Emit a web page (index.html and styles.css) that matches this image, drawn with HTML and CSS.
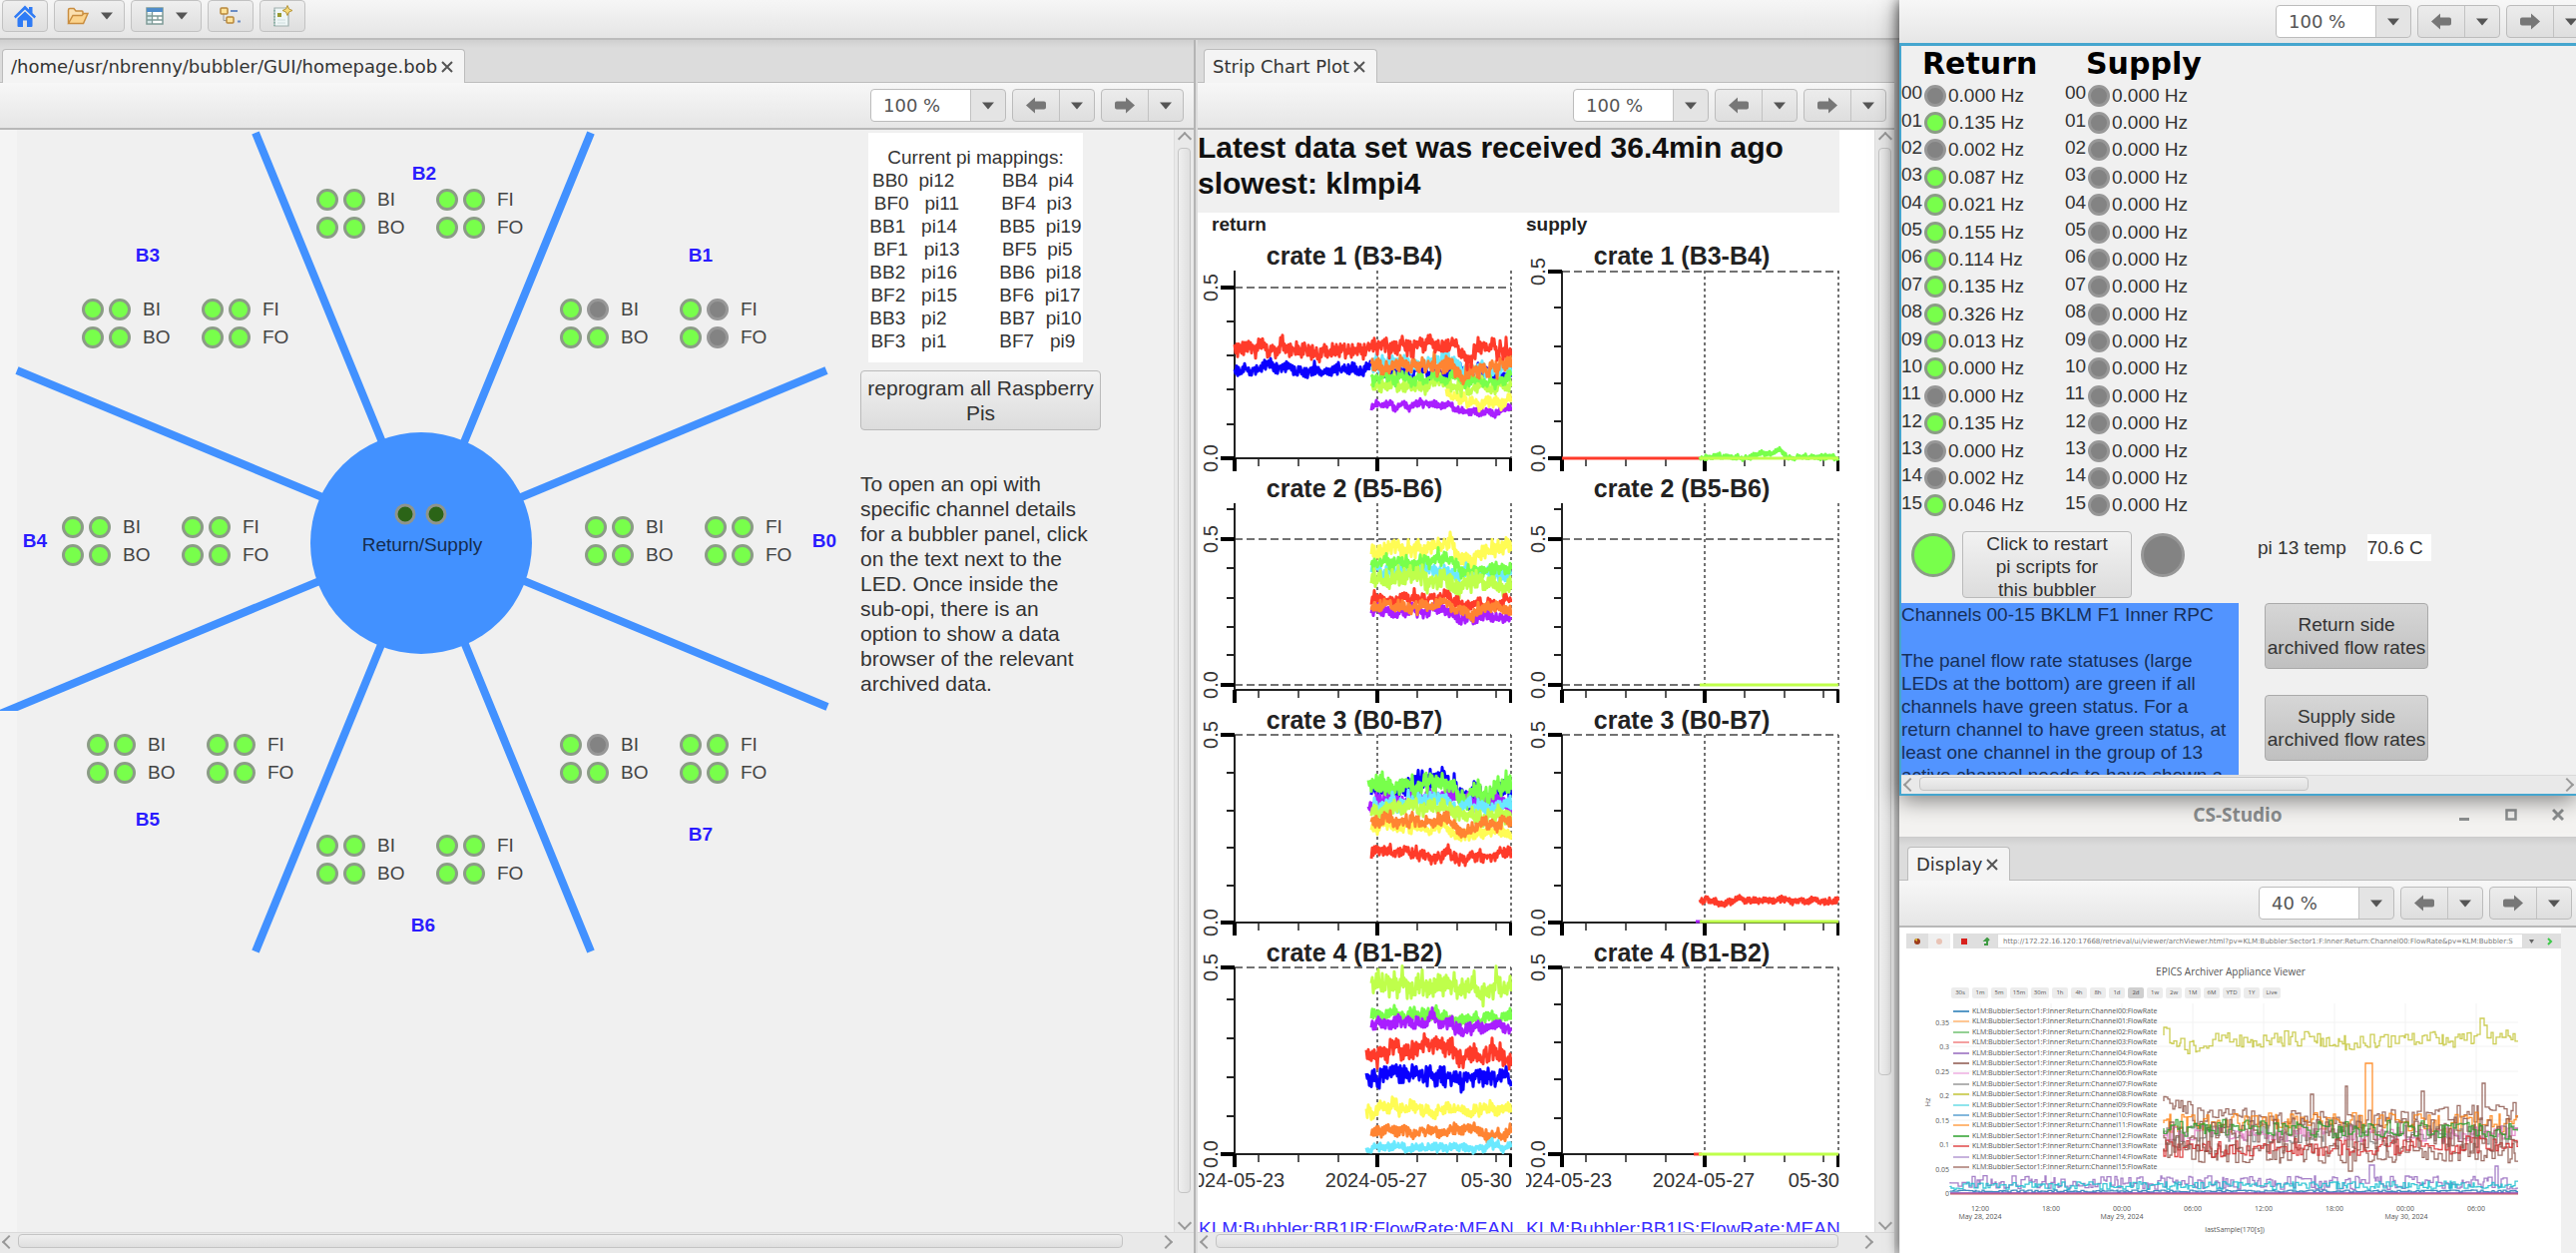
FILE: index.html
```html
<!DOCTYPE html>
<html lang="en">
<head>
<meta charset="UTF-8" />
<title>CS-Studio</title>
<link rel="stylesheet" href="styles.css">
</head>
<body>

<!-- shared icons -->
<svg class="defs" aria-hidden="true">
  <symbol id="i-left" viewBox="0 0 20 17"><path d="M0 8.500 9 0.500V4.500H18Q20 4.500 20 6.500V10.500Q20 12.500 18 12.500H9V16.500Z" fill="#777"/></symbol>
  <symbol id="i-right" viewBox="0 0 20 17"><path d="M20 8.500 11 0.500V4.500H2Q0 4.500 0 6.500V10.500Q0 12.500 2 12.500H11V16.500Z" fill="#777"/></symbol>
  <symbol id="i-down" viewBox="0 0 12 8"><path d="M0 0.500H12L6 7.500Z" fill="#555"/></symbol>
  <symbol id="i-close" viewBox="0 0 12 12"><path d="M1 1 11 11M11 1 1 11" stroke="#555" stroke-width="2" fill="none"/></symbol>
</svg>

<div class="desktop">

  <!-- main window -->
  <main class="window main-window">
    <div class="main-toolbar">
      <button class="tool" aria-label="Home">
        <svg width="22" height="22" viewBox="0 0 22 22"><path d="M11 0.500 15 4.500V2H18.500V8L22 11.500 20.500 13.500 11 4.500 1.500 13.500 0 11.500Z" fill="#2f7bf5"/><path d="M11 6.500 18.500 13.500V21Q18.500 22 17.500 22H13V15.500H9V22H4.500Q3.500 22 3.500 21V13.500Z" fill="#2f7bf5"/></svg>
      </button>
      <button class="tool wide" aria-label="Open">
        <svg width="22" height="18" viewBox="0 0 22 18"><path d="M1.500 16V3Q1.500 1.500 3 1.500H7L9 4H15Q16 4 16 5V7" fill="#fbe0b0" stroke="#c98d3f" stroke-width="1.500"/><path d="M1.500 16.500 6 8.500H15L17 6.500H21L16.500 16.500Z" fill="#fbd38c" stroke="#c98d3f" stroke-width="1.500"/></svg>
        <svg class="down"><use href="#i-down"/></svg>
      </button>
      <button class="tool wide" aria-label="Layout">
        <svg width="18" height="18" viewBox="0 0 18 18"><rect x="1" y="1" width="16" height="16" fill="#fff" stroke="#7d9a97" stroke-width="1.500"/><rect x="1" y="1" width="16" height="4" fill="#4f8cc9"/><path d="M2 6H6V16H2Z" fill="#d6e8ea"/><path d="M6.500 5V17M1 9H17M1 13H17M12 9V13" stroke="#7d9a97" stroke-width="1.300"/></svg>
        <svg class="down"><use href="#i-down"/></svg>
      </button>
      <button class="tool" aria-label="Browse tree">
        <svg width="22" height="18" viewBox="0 0 22 18"><path d="M4 7V13.500H8" fill="none" stroke="#999" stroke-width="1"/><rect x="1" y="1" width="7" height="6" rx="1" fill="#ffe39a" stroke="#b8863a" stroke-width="1.500"/><rect x="7" y="10" width="7" height="6" rx="1" fill="#ffe39a" stroke="#b8863a" stroke-width="1.500"/><path d="M11 4H18M18 14.500H21" stroke="#6a8cc4" stroke-width="2"/></svg>
      </button>
      <button class="tool" aria-label="New display">
        <svg width="20" height="22" viewBox="0 0 20 22"><path d="M2 3H16V21H2Z" fill="#eef6f6" stroke="#9fb0ae" stroke-width="1.200"/><path d="M2 5V21" stroke="#8fb3a8" stroke-width="2" stroke-dasharray="1.500 1.500"/><path d="M5 8H9V12H5Z" fill="#9a9a30"/><path d="M5 15H13M5 18H13" stroke="#cfdede"/><path d="M15 0.500 16.500 4 20 5.500 16.500 7 15 10.500 13.500 7 10 5.500 13.500 4Z" fill="#f6dc7b" stroke="#b8963a"/></svg>
      </button>
    </div>

    <div class="panes">
      <section class="pane pane-home">
        <div class="tabs">
          <div class="tab">/home/usr/nbrenny/bubbler/GUI/homepage.bob <button class="close" aria-label="Close tab"><svg><use href="#i-close"/></svg></button></div>
        </div>
        <div class="toolbar">
          <div class="combo"><select aria-label="Zoom"><option>100 %</option></select><svg class="down"><use href="#i-down"/></svg></div>
          <div class="split"><button aria-label="Back"><svg class="arrow"><use href="#i-left"/></svg></button><button aria-label="Back history"><svg class="down"><use href="#i-down"/></svg></button></div>
          <div class="split"><button aria-label="Forward"><svg class="arrow"><use href="#i-right"/></svg></button><button aria-label="Forward history"><svg class="down"><use href="#i-down"/></svg></button></div>
        </div>
        <div class="scroller">
          <div class="display home">
            <div class="diagram" id="diagram">
              <svg class="spokes" width="862" height="850" viewBox="0 0 862 850">
                <clipPath id="spokeClip"><rect width="862" height="582"/></clipPath>
                <g stroke="#4291ff" stroke-width="8">
                  <path d="M256 3 592 823M592 3 256 823M17 241 829 578"/>
                  <path d="M828 241 -12 590" clip-path="url(#spokeClip)"/>
                </g>
                <circle cx="422" cy="414" r="111" fill="#4291ff"/>
                <g fill="#2b6417" stroke="#8f958c" stroke-width="3">
                  <circle cx="406" cy="385" r="9"/>
                  <circle cx="437" cy="385" r="9"/>
                </g>
                <text x="423" y="422" text-anchor="middle" class="hub">Return/Supply</text>
              </svg>
            </div>
            <div class="side">
<pre class="mappings">Current pi mappings:
BB0  pi12         BB4  pi4 
BF0   pi11        BF4  pi3 
BB1   pi14        BB5  pi19
BF1   pi13        BF5  pi5 
BB2   pi16        BB6  pi18
BF2   pi15        BF6  pi17
BB3   pi2          BB7  pi10
BF3   pi1          BF7   pi9 </pre>
              <button class="action reprogram">reprogram all Raspberry Pis</button>
              <p class="help">To open an opi with specific channel details for a bubbler panel, click on the text next to the LED. Once inside the sub-opi, there is an option to show a data browser of the relevant archived data.</p>
            </div>
          </div>
          <div class="vbar"><i class="chev up"></i><div class="track"><div class="thumb t98"></div></div><i class="chev dn"></i></div>
        </div>
        <div class="hbar"><i class="chev lt"></i><div class="track"><div class="thumb t97"></div></div><i class="chev rt"></i></div>
      </section>

      <section class="pane pane-strip">
        <div class="tabs">
          <div class="tab">Strip Chart Plot <button class="close" aria-label="Close tab"><svg><use href="#i-close"/></svg></button></div>
        </div>
        <div class="toolbar">
          <div class="combo"><select aria-label="Zoom"><option>100 %</option></select><svg class="down"><use href="#i-down"/></svg></div>
          <div class="split"><button aria-label="Back"><svg class="arrow"><use href="#i-left"/></svg></button><button aria-label="Back history"><svg class="down"><use href="#i-down"/></svg></button></div>
          <div class="split"><button aria-label="Forward"><svg class="arrow"><use href="#i-right"/></svg></button><button aria-label="Forward history"><svg class="down"><use href="#i-down"/></svg></button></div>
        </div>
        <div class="scroller">
          <div class="display strip">
            <h1>Latest data set was received 36.4min ago<br>slowest: klmpi4</h1>
            <div class="strip-cols">
              <div class="strip-col">
                <h2 class="indent">return</h2>
                <svg id="returnCharts" width="314" height="960" viewBox="0 240 314 960"></svg>
                <a href="#">KLM:Bubbler:BB1IR:FlowRate:MEAN</a>
              </div>
              <div class="strip-col">
                <h2>supply</h2>
                <svg id="supplyCharts" width="314" height="960" viewBox="0 240 314 960"></svg>
                <a href="#">KLM:Bubbler:BB1IS:FlowRate:MEAN</a>
              </div>
            </div>
          </div>
          <div class="vbar"><i class="chev up"></i><div class="track"><div class="thumb t87"></div></div><i class="chev dn"></i></div>
        </div>
        <div class="hbar"><i class="chev lt"></i><div class="track"><div class="thumb t97"></div></div><i class="chev rt"></i></div>
      </section>
    </div>
  </main>

  <div class="side-windows">
    <!-- panel details -->
    <section class="window panel-window">
      <div class="toolbar overhang">
        <div class="combo"><select aria-label="Zoom"><option>100 %</option></select><svg class="down"><use href="#i-down"/></svg></div>
        <div class="split"><button aria-label="Back"><svg class="arrow"><use href="#i-left"/></svg></button><button aria-label="Back history"><svg class="down"><use href="#i-down"/></svg></button></div>
        <div class="split"><button aria-label="Forward"><svg class="arrow"><use href="#i-right"/></svg></button><button aria-label="Forward history"><svg class="down"><use href="#i-down"/></svg></button></div>
      </div>
      <div class="panel-frame">
        <div class="display panel">
          <div class="channels">
            <table><caption>Return</caption><tbody id="returnChannels"></tbody></table>
            <table><caption>Supply</caption><tbody id="supplyChannels"></tbody></table>
          </div>
          <div class="status">
            <span class="led big on"></span>
            <button class="action restart">Click to restart<br>pi scripts for<br>this bubbler</button>
            <span class="led big"></span>
            <span class="temp-label">pi 13 temp</span>
            <span class="temp">70.6 C</span>
          </div>
          <div class="details">
            <div class="note">Channels 00-15 BKLM F1 Inner RPC<br><br>The panel flow rate statuses (large LEDs at the bottom) are green if all channels have green status. For a return channel to have green status, at least one channel in the group of 13 active channel needs to have shown a</div>
            <div class="archive-buttons">
              <button class="action dark">Return side archived flow rates</button>
              <button class="action dark">Supply side archived flow rates</button>
            </div>
          </div>
        </div>
        <div class="hbar short"><i class="chev lt"></i><div class="track"><div class="thumb t61"></div></div><i class="chev rt"></i></div>
      </div>
    </section>

    <!-- archive viewer -->
    <section class="window viewer-window">
      <div class="titlebar">
        <span></span>
        <span class="title">CS-Studio</span>
        <div class="win-buttons">
          <button aria-label="Minimize"><svg width="12" height="14"><path d="M1 11.500H11" stroke="#8b8e8f" stroke-width="3"/></svg></button>
          <button aria-label="Maximize"><svg width="12" height="14"><rect x="1.500" y="2.500" width="9" height="9" fill="none" stroke="#8b8e8f" stroke-width="2.500"/></svg></button>
          <button aria-label="Close"><svg width="12" height="14"><path d="M1 2 11 12M11 2 1 12" stroke="#8b8e8f" stroke-width="3"/></svg></button>
        </div>
      </div>
      <div class="tabs">
        <div class="tab">Display <button class="close" aria-label="Close tab"><svg><use href="#i-close"/></svg></button></div>
      </div>
      <div class="toolbar">
        <div class="combo"><select aria-label="Zoom"><option>40 %</option></select><svg class="down"><use href="#i-down"/></svg></div>
        <div class="split"><button aria-label="Back"><svg class="arrow"><use href="#i-left"/></svg></button><button aria-label="Back history"><svg class="down"><use href="#i-down"/></svg></button></div>
        <div class="split"><button aria-label="Forward"><svg class="arrow"><use href="#i-right"/></svg></button><button aria-label="Forward history"><svg class="down"><use href="#i-down"/></svg></button></div>
      </div>
      <div class="display viewer">
        <div class="browser">
          <div class="browser-bar">
            <button aria-label="Previous page"><svg width="8" height="8"><circle cx="4" cy="4" r="3" fill="#9c3b1c"/><path d="M1 2 4 1V4Z" fill="#e0c02c"/></svg></button>
            <button class="off" aria-label="Next page"><svg width="8" height="8"><circle cx="4" cy="4" r="3" fill="#e9c3b5"/></svg></button>
            <button class="after" aria-label="Stop"><svg width="8" height="8"><path d="M1 1H7V7H1Z" fill="#d8201c"/></svg></button>
            <button aria-label="Reload"><svg width="8" height="8"><path d="M2 7H5V3H3L5 1 7 3" fill="none" stroke="#3f9b43" stroke-width="2"/></svg></button>
            <input type="text" aria-label="Address" value="http://172.22.16.120:17668/retrieval/ui/viewer/archViewer.html?pv=KLM:Bubbler:Sector1:F:Inner:Return:Channel00:FlowRate&amp;pv=KLM:Bubbler:S">
            <button class="narrow" aria-label="History"><svg width="5" height="4"><path d="M0 0H5L2.500 4Z" fill="#666"/></svg></button>
            <button aria-label="Go"><svg width="8" height="8"><path d="M2 1 5 4 2 7" fill="none" stroke="#3ec94a" stroke-width="2"/></svg></button>
          </div>
          <h3>EPICS Archiver Appliance Viewer</h3>
          <div class="ranges" id="ranges"></div>
          <svg id="archive" width="640" height="240" viewBox="0 0 640 240"></svg>
        </div>
      </div>
    </section>
  </div>
</div>

<script src="script.js"></script>
</body>
</html>
```
FILE: styles.css
```css
* {
  box-sizing: border-box;
}
body {
  margin: 0;
  height: 100vh;
  overflow: hidden;
  font-family: "Liberation Sans", Arial, sans-serif;
  font-size: 19px;
  color: #333;
  background: #dcdcdc;
}
button,
input,
select {
  font: inherit;
  color: inherit;
  margin: 0;
  padding: 0;
}
button {
  cursor: pointer;
}
.defs {
  display: none;
}
.down {
  width: 12px;
  height: 8px;
}
.arrow {
  width: 20px;
  height: 17px;
}

/* windows */
.desktop {
  display: grid;
  grid-template-columns: minmax(0, 1903fr) minmax(0, 678fr);
  height: 100%;
}
.window {
  display: flex;
  flex-direction: column;
  min-height: 0;
  min-width: 0;
}
.side-windows {
  display: grid;
  grid-template-rows: minmax(0, 797fr) minmax(0, 458fr);
  min-height: 0;
  box-shadow: 0 0 12px rgba(0, 0, 0, 0.6);
}
.panel-window {
  z-index: 1;
  box-shadow: 0 4px 22px rgba(0, 0, 0, 0.5);
}
.panes {
  flex: 1;
  min-height: 0;
  display: grid;
  grid-template-columns: minmax(0, 1198fr) minmax(0, 705fr);
}
.pane {
  display: flex;
  flex-direction: column;
  min-height: 0;
  min-width: 0;
}
.pane-home {
  border-right: 2px solid #b4b4b4;
}
.pane-strip {
  border-left: 2px solid #dcdcdc;
  border-right: 5px solid #d0d0d0;
}
.display {
  flex: 1;
  min-width: 0;
  overflow: hidden;
  background: #f0f0f0;
}
.scroller {
  flex: 1;
  min-height: 0;
  display: flex;
}

/* toolbars */
.main-toolbar {
  display: flex;
  gap: 6px;
  height: 40px;
  padding: 0 2px 6px;
  background: linear-gradient(#f6f6f6, #e5e5e5);
  border-bottom: 2px solid #bcbcbc;
}
.tool {
  width: 46px;
  display: flex;
  align-items: center;
  justify-content: center;
  background: linear-gradient(#efefef, #dedede);
  border: 1px solid #c2c2c2;
  border-radius: 4px;
}
.tool.wide {
  width: 71px;
  gap: 12px;
}
.tabs {
  display: flex;
  align-items: flex-end;
  height: 43px;
  padding-left: 2px;
  background: linear-gradient(#cfcfcf, #dcdcdc 8px);
  border-bottom: 1px solid #bcbcbc;
}
.pane-strip .tabs {
  padding-left: 6px;
}
.viewer-window .tabs {
  padding-left: 8px;
}
.tab {
  display: flex;
  align-items: center;
  gap: 4px;
  height: 34px;
  margin-bottom: -1px;
  padding: 0 11px 0 8px;
  font-family: "DejaVu Sans", sans-serif;
  font-size: 18px;
  white-space: nowrap;
  background: #f4f4f4;
  border: 1px solid #bcbcbc;
  border-bottom: 0;
  border-radius: 4px 4px 0 0;
}
.close {
  display: flex;
  background: none;
  border: 0;
}
.close svg {
  width: 12px;
  height: 12px;
}
.toolbar {
  display: flex;
  align-items: center;
  justify-content: flex-end;
  gap: 6px;
  height: 47px;
  flex: none;
  padding: 0 10px 0 0;
  font-family: "DejaVu Sans", sans-serif;
  font-size: 18px;
  background: linear-gradient(#f7f7f7, #e6e6e6);
  border-bottom: 2px solid #b8b8b8;
}
.pane-strip .toolbar {
  padding-right: 8px;
}
.viewer-window .toolbar {
  padding-right: 4px;
}
.toolbar.overhang {
  height: 43px;
  border: 0;
  margin-right: -13px;
  padding-right: 0;
}
.combo {
  position: relative;
  display: flex;
}
.combo select {
  appearance: none;
  width: 136px;
  height: 33px;
  padding-left: 12px;
  color: #555;
  background: linear-gradient(90deg, transparent 99px, #c2c2c2 99px, #c2c2c2 100px, #e4e4e4 100px), #fff;
  border: 1px solid #bcbcbc;
  border-radius: 4px;
}
.combo .down {
  position: absolute;
  right: 12px;
  top: 13px;
  pointer-events: none;
}
.split {
  display: flex;
  height: 33px;
  border: 1px solid #bcbcbc;
  border-radius: 4px;
  background: linear-gradient(#ececec, #dedede);
}
.split button {
  width: 46px;
  display: flex;
  align-items: center;
  justify-content: center;
  background: none;
  border: 0;
}
.split button + button {
  width: 35px;
  border-left: 1px solid #c2c2c2;
}

/* scrollbars */
.vbar {
  width: 20px;
  flex: none;
  display: flex;
  flex-direction: column;
  align-items: center;
  background: #e9e9e9;
  border-left: 1px solid #dedede;
}
.hbar {
  height: 21px;
  flex: none;
  display: flex;
  padding: 0 19px 4px 0;
  background: #e9e9e9;
  border-top: 1px solid #dadada;
}
.hbar.short {
  height: 19px;
  padding: 0 0 2px;
}
.track {
  flex: 1;
}
.thumb {
  background: linear-gradient(#efefef, #dfdfdf);
  border: 1px solid #c4c4c4;
  border-radius: 4px;
}
.vbar .thumb {
  width: 13px;
  background: linear-gradient(90deg, #efefef, #dfdfdf);
}
.hbar .thumb {
  height: 14px;
  margin-top: 1px;
}
.vbar .t98 { height: 98%; }
.vbar .t87 { height: 87%; }
.hbar .t97 { width: 97%; }
.hbar .t61 { width: 61%; }
.chev {
  flex: none;
  width: 18px;
  height: 18px;
  display: flex;
  align-items: center;
  justify-content: center;
}
.chev::before {
  content: "";
  width: 8px;
  height: 8px;
  border: solid #999;
  border-width: 2px 0 0 2px;
}
.up::before { transform: rotate(45deg); }
.dn::before { transform: rotate(225deg); }
.lt::before { transform: rotate(-45deg); }
.rt::before { transform: rotate(135deg); }

/* LEDs */
.led {
  display: block;
  flex: none;
  width: 22px;
  height: 22px;
  border: 3px solid #979797;
  border-radius: 50%;
  background: #838383;
}
.led.on {
  background: #78ff4b;
  border-color: #8b9c86;
}
.led.big {
  width: 44px;
  height: 44px;
}

/* home display */
.home {
  display: flex;
  background: linear-gradient(90deg, #f4f4f4 17px, #f0f0f0 17px);
}
.diagram {
  position: relative;
  flex: none;
  width: 862px;
}
.spokes {
  display: block;
}
.hub {
  font-size: 19px;
  fill: #152c4f;
}
.sector {
  position: absolute;
  display: flex;
  gap: 5px;
}
.quad {
  display: grid;
  grid-template-columns: 22px 22px 61px;
  gap: 6px 5px;
  line-height: 22px;
}
.quad a {
  padding-left: 7px;
  color: #444;
  text-decoration: none;
}
.sector-name {
  position: absolute;
  width: 40px;
  margin: -11px 0 0 -20px;
  line-height: 22px;
  text-align: center;
  font-weight: bold;
  color: #2a1cff;
}
.side {
  width: 242px;
  flex: none;
  padding-top: 3px;
}
.mappings {
  width: 215px;
  height: 230px;
  margin: 0 0 8px 8px;
  padding-top: 13px;
  font: inherit;
  line-height: 23px;
  text-align: center;
  background: #fff;
}
.action {
  display: block;
  color: #333;
  background: linear-gradient(#f2f2f2, #dcdcdc);
  border: 1px solid #bababa;
  border-radius: 4px;
}
.reprogram {
  width: 241px;
  height: 60px;
  font-size: 21px;
  line-height: 25px;
}
.help {
  width: 236px;
  margin: 41px 0 0;
  font-size: 21px;
  line-height: 25px;
}

/* strip charts */
.strip {
  background: #fff;
}
.strip h1 {
  width: 643px;
  height: 83px;
  margin: 0;
  font-size: 30px;
  line-height: 36px;
  color: #111;
  background: #f0f0f0;
}
.strip-cols {
  display: flex;
  gap: 14px;
  padding-left: 1px;
}
.strip-col {
  width: 314px;
}
.strip h2 {
  margin: 0;
  height: 27px;
  font-size: 19px;
  line-height: 24px;
  color: #222;
}
.strip h2.indent {
  padding-left: 13px;
}
.strip-col svg {
  display: block;
  margin-bottom: 20px;
}
.strip-col a {
  display: block;
  line-height: 22px;
  color: #3a2cff;
  text-decoration: none;
  white-space: nowrap;
}
.chart-title {
  font-size: 25px;
  font-weight: bold;
  fill: #222;
}
.chart-label {
  font-size: 20px;
  fill: #333;
}

/* panel display */
.panel-frame {
  flex: 1;
  min-height: 0;
  display: flex;
  flex-direction: column;
  border: solid #45a6cf;
  border-width: 3px 0 2px 2px;
}
.channels {
  display: flex;
}
.channels table {
  width: 164px;
  height: 438px;
  border-collapse: collapse;
}
.channels caption {
  height: 36px;
  padding-left: 21px;
  text-align: left;
  font: bold 30px/36px "DejaVu Sans", sans-serif;
  color: #000;
}
.channels td {
  padding: 0;
  line-height: 22px;
  white-space: nowrap;
}
.channels .num {
  width: 23px;
  padding-bottom: 5px;
}
.channels .lamp {
  width: 24px;
}
.status {
  display: flex;
  align-items: flex-start;
  padding: 12px 0 5px 10px;
}
.status .led {
  margin-top: 2px;
}
.restart {
  width: 170px;
  height: 67px;
  margin: 0 9px 0 7px;
  line-height: 23px;
}
.temp-label {
  margin-left: 73px;
  line-height: 34px;
}
.temp {
  width: 64px;
  margin: 3px 0 0 21px;
  line-height: 27px;
  background: #fff;
}
.details {
  display: flex;
  gap: 26px;
}
.note {
  width: 338px;
  height: 180px;
  line-height: 23px;
  color: #17305a;
  background: #5294ff;
}
.archive-buttons {
  display: flex;
  flex-direction: column;
  gap: 26px;
}
.dark {
  width: 164px;
  height: 66px;
  line-height: 23px;
  background: linear-gradient(#d6d6d6, #c0c0c0);
  border-color: #aaa;
}

/* archive viewer */
.titlebar {
  display: grid;
  grid-template-columns: 1fr auto 1fr;
  align-items: center;
  height: 42px;
  padding: 0 8px 4px;
  background: #f4f3f1;
  border-bottom: 1px solid #ccc;
}
.title {
  font-family: "Noto Sans", sans-serif;
  font-weight: bold;
  color: #8b8e8f;
}
.win-buttons {
  display: flex;
  justify-content: flex-end;
  gap: 35px;
  padding-right: 4px;
}
.win-buttons button {
  display: flex;
  background: none;
  border: 0;
}
.viewer {
  padding-left: 1px;
}
.browser {
  width: 662px;
  height: 100%;
  background: #fff;
}
.browser-bar {
  display: flex;
  height: 21px;
  padding: 6px 0 0 6px;
}
.browser-bar button {
  width: 22px;
  display: flex;
  align-items: center;
  justify-content: center;
  background: #dfdfdf;
  border: 0;
}
.browser-bar .off {
  background: #f0f0f0;
}
.browser-bar .after {
  margin-left: 3px;
}
.browser-bar .narrow {
  width: 16px;
}
.browser-bar input {
  flex: 1;
  min-width: 0;
  padding-left: 5px;
  font: 7px "DejaVu Sans", sans-serif;
  color: #777;
  border: 1px solid #ddd;
  background: #fff;
}
.browser h3 {
  margin: 16px 0 0;
  font: 10px/14px "Open Sans", sans-serif;
  text-align: center;
  color: #555;
}
.ranges {
  display: flex;
  gap: 3px;
  padding: 9px 0 5px 51px;
}
.ranges button {
  width: 16px;
  height: 11px;
  font: 6px/9px "Open Sans", sans-serif;
  color: #555;
  background: #ececec;
  border: 0;
  border-radius: 2px;
}
.ranges .long {
  width: 18px;
}
.ranges .selected {
  background: #cfcfcf;
}
#archive {
  display: block;
}
.tiny {
  font-family: "Open Sans", sans-serif;
  font-size: 7px;
  fill: #555;
}
```
FILE: script.js
```js
const RED = "#ff3b2a", BLUE = "#0a00ff", CYAN = "#6ae9ff", ORANGE = "#ff8432";
const GREEN = "#78ff4b", LIME = "#bfff4b", YELLOW = "#fffc54", PURPLE = "#a91eff";

// seeded random, so that the traces look the same on every load
let seed = 7;
function rnd() {
  seed = (seed * 1664525 + 1013904223) % 4294967296;
  return seed / 4294967296;
}

function at(points, x) {
  for (let i = 1; i < points.length; i++) {
    const [x0, y0] = points[i - 1];
    const [x1, y1] = points[i];
    if (x <= x1) return y0 + (y1 - y0) * (x - x0) / (x1 - x0);
  }
  return points[points.length - 1][1];
}

/* ---- sectors around the hub ---- */
const sectors = [
  { name: "B2", x: 317, y: 59, tx: 425, ty: 44 },
  { name: "B3", x: 82, y: 169, tx: 148, ty: 126 },
  { name: "B1", x: 561, y: 169, tx: 702, ty: 126, off: [1, 5, 7] },
  { name: "B4", x: 62, y: 387, tx: 35, ty: 412 },
  { name: "B0", x: 586, y: 387, tx: 826, ty: 412 },
  { name: "B5", x: 87, y: 605, tx: 148, ty: 691 },
  { name: "B6", x: 317, y: 706, tx: 424, ty: 797 },
  { name: "B7", x: 561, y: 605, tx: 702, ty: 706, off: [1] }
];

let html = "";
sectors.forEach(s => {
  html += `<span class="sector-name" style="left:${s.tx}px;top:${s.ty}px">${s.name}</span>`;
  html += `<div class="sector" style="left:${s.x}px;top:${s.y}px">`;
  ["B", "F"].forEach((side, q) => {
    html += `<div class="quad">`;
    ["I", "O"].forEach((layer, r) => {
      for (let c = 0; c < 2; c++) {
        const off = (s.off || []).includes(q * 4 + r * 2 + c);
        html += `<span class="led ${off ? "" : "on"}"></span>`;
      }
      html += `<a href="#">${side}${layer}</a>`;
    });
    html += `</div>`;
  });
  html += `</div>`;
});
document.getElementById("diagram").insertAdjacentHTML("beforeend", html);

/* ---- channel tables ---- */
const returnRates = ["0.000", "0.135", "0.002", "0.087", "0.021", "0.155", "0.114", "0.135",
  "0.326", "0.013", "0.000", "0.000", "0.135", "0.000", "0.002", "0.046"];
const returnOff = [0, 2, 11, 13, 14];

function channelRows(rates, isOn) {
  return rates.map((rate, i) =>
    `<tr><td class="num">${String(i).padStart(2, "0")}</td>` +
    `<td class="lamp"><span class="led ${isOn(i) ? "on" : ""}"></span></td>` +
    `<td>${rate} Hz</td></tr>`).join("");
}
document.getElementById("returnChannels").innerHTML = channelRows(returnRates, i => !returnOff.includes(i));
document.getElementById("supplyChannels").innerHTML = channelRows(returnRates.map(() => "0.000"), () => false);

/* ---- strip charts ---- */
function trace(color, amp, points) {
  const end = points[points.length - 1][0];
  let d = "";
  let drift = 0;
  for (let x = points[0][0]; x <= end; x++) {
    const side = x % 2 ? 1 : -1;
    const spike = rnd() > 0.93 ? 1.8 : 1;
    drift = drift * 0.75 + (rnd() - 0.5) * amp * 0.8;
    const y = at(points, x) + drift + side * amp * (0.15 + 0.5 * rnd()) * spike;
    d += (d ? "L" : "M") + x + " " + y.toFixed(1);
  }
  return `<path d="${d}" fill="none" stroke="${color}" stroke-width="3" stroke-linejoin="round"/>`;
}

function chart(c) {
  let s = `<path d="M36 ${c.half}H313" stroke="#444" stroke-width="1.5" stroke-dasharray="8 4"/>`;
  if (c.zero !== c.base) s += `<path d="M36 ${c.zero}H313" stroke="#444" stroke-width="1.5" stroke-dasharray="8 4"/>`;
  s += `<path d="M179 ${c.top}V${c.base}M313 ${c.top}V${c.base}" stroke="#444" stroke-width="1.5" stroke-dasharray="3 3"/>`;
  s += `<path d="M36 ${c.top}V${c.base}H313" fill="none" stroke="#222" stroke-width="2"/>`;
  s += `<path d="M22 ${c.half}H36M22 ${c.zero}H36" stroke="#000" stroke-width="4"/>`;
  s += `<path d="M36 ${c.base}v13M179 ${c.base}v13M313 ${c.base}v13" stroke="#000" stroke-width="4"/>`;
  [60, 100, 140, 219, 259, 298].forEach(x => {
    s += `<path d="M${x} ${c.base}v8" stroke="#222" stroke-width="1.5"/>`;
  });
  c.ticks.forEach(y => {
    s += `<path d="M28 ${y}H36" stroke="#222" stroke-width="2"/>`;
  });
  s += `<text class="chart-title" x="156" y="${c.title}" text-anchor="middle">${c.name}</text>`;
  [["0.5", c.half], ["0.0", c.zero]].forEach(([label, y]) => {
    s += `<text class="chart-label" transform="translate(19 ${y}) rotate(-90)" text-anchor="middle">${label}</text>`;
  });
  c.traces.forEach(t => s += trace(...t));
  return s;
}

const dates = `<text class="chart-label" x="35" y="1189" text-anchor="middle">2024-05-23</text>
  <text class="chart-label" x="178" y="1189" text-anchor="middle">2024-05-27</text>
  <text class="chart-label" x="314" y="1189" text-anchor="end">05-30</text>`;

const names = ["crate 1 (B3-B4)", "crate 2 (B5-B6)", "crate 3 (B0-B7)", "crate 4 (B1-B2)"];

const returnData = [
  { name: names[0], title: 265, top: 271, half: 288, zero: 459, base: 459, ticks: [322, 356, 390, 425], traces: [
    [BLUE, 7, [[36, 371], [80, 366], [100, 371], [170, 371], [313, 373]]],
    [CYAN, 9, [[173, 370], [255, 362], [262, 374], [313, 368]]],
    [PURPLE, 5, [[173, 407], [250, 406], [262, 412], [290, 413], [313, 409]]],
    [YELLOW, 8, [[248, 392], [258, 402], [290, 404], [313, 397]]],
    [LIME, 8, [[173, 387], [250, 384], [262, 388], [313, 386]]],
    [GREEN, 7, [[173, 379], [255, 376], [262, 383], [313, 380]]],
    [ORANGE, 10, [[173, 366], [255, 364], [262, 372], [313, 369]]],
    [RED, 10, [[36, 347], [90, 349], [130, 353], [165, 349], [200, 346], [240, 345], [256, 340], [262, 353], [313, 350]]]
  ] },
  { name: names[1], title: 498, top: 504, half: 540, zero: 686, base: 691, ticks: [510, 569, 599, 628, 656], traces: [
    [YELLOW, 11, [[173, 551], [230, 546], [255, 543], [262, 559], [313, 550]]],
    [CYAN, 8, [[173, 572], [250, 570], [262, 577], [313, 573]]],
    [GREEN, 8, [[173, 562], [250, 561], [262, 570], [313, 566]]],
    [LIME, 12, [[173, 581], [250, 579], [262, 589], [313, 585]]],
    [RED, 8, [[173, 601], [250, 597], [262, 606], [313, 602]]],
    [PURPLE, 7, [[173, 613], [250, 612], [262, 618], [313, 615]]],
    [ORANGE, 7, [[173, 608], [250, 607], [262, 613], [313, 609]]]
  ] },
  { name: names[2], title: 730, top: 736, half: 736, zero: 924, base: 924, ticks: [774, 812, 849, 887], traces: [
    [BLUE, 12, [[173, 789], [250, 784], [262, 797], [313, 791]]],
    [PURPLE, 9, [[170, 810], [176, 804], [250, 796], [262, 805], [313, 803]]],
    [GREEN, 12, [[170, 788], [250, 783], [262, 796], [313, 790]]],
    [CYAN, 9, [[175, 804], [250, 799], [262, 809], [313, 806]]],
    [YELLOW, 7, [[173, 826], [250, 829], [262, 836], [313, 829]]],
    [LIME, 10, [[173, 812], [250, 809], [262, 820], [313, 815]]],
    [ORANGE, 8, [[173, 821], [250, 822], [262, 830], [313, 824]]],
    [RED, 7, [[173, 854], [245, 856], [250, 848], [262, 860], [313, 855]]]
  ] },
  { name: names[3], title: 963, top: 969, half: 969, zero: 1156, base: 1156, ticks: [1001, 1040, 1079, 1118], traces: [
    [LIME, 13, [[173, 984], [250, 983], [262, 992], [313, 988]]],
    [GREEN, 8, [[173, 1018], [250, 1016], [262, 1023], [313, 1019]]],
    [PURPLE, 8, [[173, 1025], [250, 1020], [262, 1030], [313, 1027]]],
    [RED, 12, [[168, 1053], [250, 1049], [258, 1061], [313, 1055]]],
    [BLUE, 11, [[168, 1080], [250, 1076], [262, 1082], [313, 1079]]],
    [YELLOW, 7, [[168, 1112], [313, 1111]]],
    [ORANGE, 7, [[173, 1134], [313, 1133]]],
    [CYAN, 5, [[168, 1149], [313, 1149]]]
  ] }
];
const supplyData = [
  { ...returnData[0], half: 272, ticks: [308, 347, 384, 422], traces: [
    [RED, 0, [[36, 459], [174, 459]]],
    [GREEN, 3, [[174, 458], [225, 457], [233, 454], [245, 456], [254, 450], [262, 457], [313, 458]]],
    [LIME, 0, [[174, 459], [313, 459]]]
  ] },
  { ...returnData[1], traces: [[LIME, 0, [[174, 686], [313, 686]]]] },
  { ...returnData[2], traces: [
    [RED, 4, [[174, 901], [245, 902], [313, 901]]],
    [PURPLE, 0, [[170, 923], [176, 923]]],
    [LIME, 0, [[174, 923], [313, 923]]]
  ] },
  { ...returnData[3], ticks: [1006, 1044, 1081, 1120], traces: [
    [RED, 0, [[168, 1156], [176, 1156]]],
    [LIME, 0, [[173, 1156], [313, 1156]]]
  ] }
];
document.getElementById("returnCharts").innerHTML = returnData.map(chart).join("") + dates;
document.getElementById("supplyCharts").innerHTML = supplyData.map(chart).join("") + dates;

/* ---- archive viewer ---- */
const ranges = ["30s", "1m", "5m", "15m", "30m", "1h", "4h", "8h", "1d", "2d", "1w", "2w", "1M", "6M", "YTD", "1Y", "Live"];
document.getElementById("ranges").innerHTML = ranges.map(r =>
  `<button class="${r.length > 2 ? "long" : ""} ${r === "2d" ? "selected" : ""}">${r}</button>`).join("");

function steps(color, amp, points, spikes) {
  const end = points[points.length - 1][0];
  let x = points[0][0];
  let d = `M${x} ${points[0][1]}`;
  while (x < end) {
    let y = at(points, x) + (rnd() * 2 - 1) * amp;
    (spikes || []).forEach(([sx, sy]) => {
      if (Math.abs(x - sx) < 2) y = sy;
    });
    x = Math.min(end, x + 1 + Math.round(rnd() * 3));
    d += `V${y.toFixed(1)}H${x}`;
  }
  return `<path d="${d}" fill="none" stroke="${color}" stroke-width="1.300" opacity="0.85"/>`;
}

let a = "";
[[19, "0.35"], [43, "0.3"], [68, "0.25"], [92, "0.2"], [117, "0.15"], [141, "0.1"], [166, "0.05"], [190, "0"]].forEach(([y, label]) => {
  a += `<path d="M50 ${y}H619" stroke="#f2f2f2"/>`;
  a += `<text class="tiny" x="49" y="${y + 3}" text-anchor="end">${label}</text>`;
});
["12:00", "18:00", "00:00", "06:00", "12:00", "18:00", "00:00", "06:00"].forEach((label, i) => {
  const x = 80 + 71 * i;
  a += `<path d="M${x} 0V190" stroke="#f2f2f2"/>`;
  a += `<text class="tiny" x="${x}" y="208" text-anchor="middle">${label}</text>`;
});
[[80, 28], [222, 29], [507, 30]].forEach(([x, day]) => {
  a += `<text class="tiny" x="${x}" y="216" text-anchor="middle">May ${day}, 2024</text>`;
});
a += `<text class="tiny" x="335" y="229" text-anchor="middle">lastSample(170[s])</text>`;
a += `<text class="tiny" transform="translate(30 99) rotate(-90)" text-anchor="middle">Hz</text>`;

a += steps("#c3c436", 8, [[264, 32], [280, 38], [290, 46], [310, 37], [400, 35], [440, 40], [500, 35], [560, 37], [619, 32]], [[581, 15], [586, 22]]);
a += steps("#8c564b", 9, [[264, 98], [280, 99], [295, 112], [450, 117], [619, 108]], [[411, 91], [446, 83], [523, 88], [583, 80]]);
a += steps("#8c564b", 10, [[264, 145], [300, 150], [619, 150]], [[450, 168]]);
a += steps("#ff7f0e", 10, [[264, 120], [619, 119]], [[467, 60], [469, 60]]);
a += steps("#7f7f7f", 9, [[264, 130], [619, 132]]);
a += steps("#e377c2", 8, [[264, 130], [619, 131]]);
a += steps("#d62728", 9, [[264, 146], [619, 141]]);
a += steps("#8c564b", 18, [[264, 132], [619, 132]]);
a += steps("#2ca02c", 9, [[264, 125], [619, 127]]);
a += steps("#9467bd", 7, [[50, 179], [619, 180]], [[471, 162], [597, 163]]);
a += steps("#17becf", 4, [[50, 183], [619, 182]]);
a += steps("#1f77b4", 1, [[50, 188], [619, 188]]);
a += `<path d="M50 190H619" stroke="#8a3fae" stroke-width="1.5"/><path d="M50 191H619" stroke="#c8505a"/>`;

const colors = ["#1f77b4", "#ffb470", "#6fc06f", "#f08080", "#9467bd", "#8c564b", "#eeaee0", "#999",
  "#c3c436", "#6adbe6", "#5a9fd0", "#ffa04a", "#2ca02c", "#e04848", "#b49ad2", "#a8786f"];
colors.forEach((color, i) => {
  const y = 8 + Math.round(10.4 * i);
  a += `<path d="M53 ${y}H69" stroke="${color}" stroke-width="1.5"/>`;
  a += `<text class="tiny" x="72" y="${y + 2}">KLM:Bubbler:Sector1:F:Inner:Return:Channel${String(i).padStart(2, "0")}:FlowRate</text>`;
});
document.getElementById("archive").innerHTML = a;
```
